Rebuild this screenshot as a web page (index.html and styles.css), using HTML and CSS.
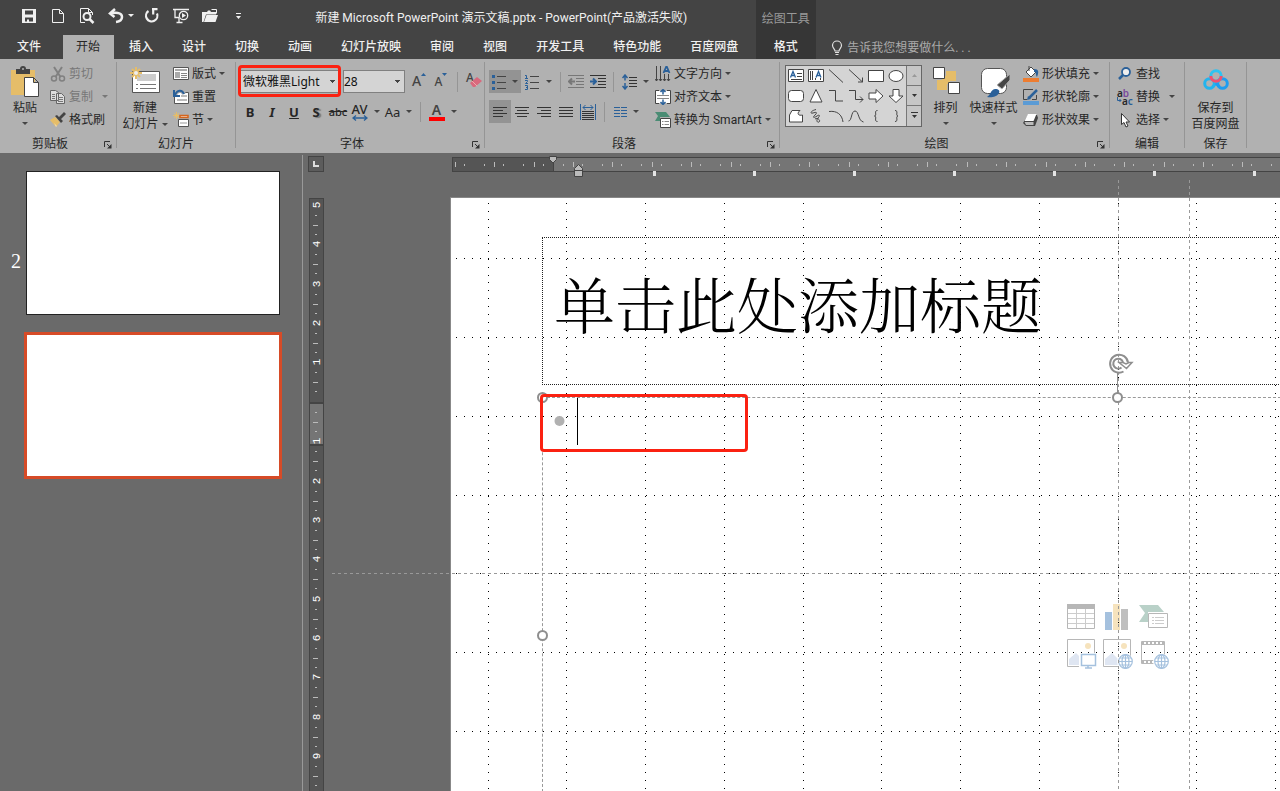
FILE: index.html
```html
<!DOCTYPE html>
<html lang="zh-CN">
<head>
<meta charset="utf-8">
<title>新建 Microsoft PowerPoint 演示文稿.pptx - PowerPoint</title>
<link rel="stylesheet" href="styles.css">
</head>
<body>
<div class="app">
<header class="header">
  <div class="titlebar">
    <div class="qat">
      <button class="qat-btn" aria-label="保存"><svg width="16" height="16"><path fill="#f0f0f0" fill-rule="evenodd" d="M1 1h14v14H1zM4 2.500v4h8v-4zM4 9.500v4h2v-2h2v2h4v-4z"/></svg></button>
      <button class="qat-btn" aria-label="新建"><svg width="16" height="16"><path fill="none" stroke="#f0f0f0" d="M2.500 1.500h7l4 4v9h-11zM9.500 1.500v4h4"/></svg></button>
      <button class="qat-btn" aria-label="打印预览"><svg width="16" height="16"><path fill="none" stroke="#f0f0f0" d="M6 14.500H1.500v-14h8l4 4V7M9.500.5v4h4"/><circle cx="8" cy="8.500" r="3.500" fill="none" stroke="#f0f0f0" stroke-width="2"/><path stroke="#f0f0f0" stroke-width="2.500" d="M10.500 11l4 4"/></svg></button>
      <button class="qat-btn undo" aria-label="撤消"><svg width="16" height="16"><path fill="none" stroke="#f0f0f0" stroke-width="2.500" d="M2 5.500c5-1 12-1.500 12 3.500 0 3-2 4.500-6 5M7 1L2 5.500 6.500 9"/></svg><i class="caret light"></i></button>
      <button class="qat-btn" aria-label="重复"><svg width="16" height="16"><path fill="none" stroke="#f0f0f0" stroke-width="2.200" d="M4.500 3A5.700 5.700 0 1 0 13 5.500M8 1.200h5.500M9.200 1v5.500"/></svg></button>
      <button class="qat-btn" aria-label="从头开始"><svg width="18" height="16"><path fill="none" stroke="#f0f0f0" stroke-width="1.300" d="M1 1.500h16M3 2v7.500h4M7 10v4M4.500 14.500h6"/><circle cx="11.500" cy="7.500" r="4.200" fill="#444" stroke="#f0f0f0" stroke-width="1.300"/><path fill="#f0f0f0" d="M10 5l4 2.500-4 2.500z"/></svg></button>
      <button class="qat-btn" aria-label="打开"><svg width="18" height="16"><path fill="#f0f0f0" d="M1 14V4h5l1-1.500h2L10 4h5v2.500H5L2.500 14zM3 14l2.500-7H17l-2.500 7z"/><path stroke="#f0f0f0" d="M10.500 1.500h5v4" fill="none"/></svg></button>
      <button class="qat-btn" aria-label="自定义快速访问工具栏"><svg width="7" height="8"><path fill="#f0f0f0" d="M1 1h5v1H1zM1 4h5L3.500 7z"/></svg></button>
    </div>
    <div class="doc-title">新建 Microsoft PowerPoint 演示文稿.pptx - PowerPoint(产品激活失败)</div>
  </div>
  <nav class="tabs">
    <button class="tab file">文件</button><button class="tab active">开始</button><button class="tab">插入</button><button class="tab">设计</button><button class="tab">切换</button><button class="tab">动画</button><button class="tab">幻灯片放映</button><button class="tab">审阅</button><button class="tab">视图</button><button class="tab">开发工具</button><button class="tab">特色功能</button><button class="tab">百度网盘</button>
  </nav>
  <div class="context"><span class="context-name">绘图工具</span><button class="tab">格式</button></div>
  <label class="tellme"><svg width="12" height="16"><path fill="none" stroke="#e0e0e0" stroke-width="1.200" d="M4 11c0-2-2.500-3-2.500-5.500a4.500 4.500 0 0 1 9 0C10.500 8 8 9 8 11zM4 12.500h4M4.500 14.500h3"/></svg><input type="text" aria-label="告诉我您想要做什么" placeholder="告诉我您想要做什么. . ."></label>
</header>

<div class="ribbon">
  <section class="group clipboard">
    <div class="body">
      <button class="big paste"><svg width="30" height="32"><path fill="#e5bd69" d="M1 4h24v25H1z"/><path fill="#444" d="M6 3h4a3 3 0 0 1 6 0h4v5H6z"/><circle cx="13" cy="3" r="1" fill="#b1b1b1"/><path fill="#fff" stroke="#444" d="M14.500 11.500h9l5 5v14h-14zM23.500 11.500v5h5"/></svg><span>粘贴</span><i class="caret"></i></button>
      <div class="stack">
        <button class="small off"><svg width="16" height="16"><path fill="none" stroke="#808080" stroke-width="2" d="M4 1l6.500 10M12 1L5.500 11"/><circle cx="4" cy="12.500" r="2.500" fill="none" stroke="#808080" stroke-width="1.500"/><circle cx="12" cy="12.500" r="2.500" fill="none" stroke="#808080" stroke-width="1.500"/></svg>剪切</button>
        <button class="small off wide"><svg width="16" height="16"><path fill="#ddd" stroke="#666" d="M.5 1.500h5l3 2v8h-8zM6.500 4.500h5l3 3v7h-8z"/><path stroke="#777" d="M2 5.500h3M2 7.500h3M2 9.500h3M8 8.500h5M8 10.500h5M8 12.500h5"/></svg>复制<i class="caret dim"></i></button>
        <button class="small"><svg width="16" height="16"><path fill="#e5bd69" d="M0 8l5-3 5 5-4 5z"/><path fill="#fff" opacity=".5" d="M4 11l3 3-1 1z"/><path fill="#444" d="M5 4l2-1 6 6-2 2zM9 5l5-5 2 2-5 5z"/></svg>格式刷</button>
      </div>
    </div>
    <footer class="foot"><span>剪贴板</span><button class="launch" aria-label="剪贴板选项"><svg width="8" height="8"><path fill="none" stroke="#333" d="M.5 6V.5H6M3 3l3 3"/><path fill="#333" d="M7.500 3v4.500H3z"/></svg></button></footer>
  </section>

  <section class="group slides">
    <div class="body">
      <button class="big newslide"><svg width="32" height="30"><path fill="#fff" stroke="#555" d="M3.500 5.500h27v21h-27z"/><path fill="#ccc" d="M8 8h19v7H8z"/><path stroke="#777" d="M7 18.500h2M11 18.500h16M7 22.500h2M11 22.500h16"/><path stroke="#e5bd69" stroke-width="2" d="M7 1v12M1 7h12M3 3l8 8M11 3l-8 8"/><circle cx="7" cy="7" r="2" fill="#eee"/></svg><span>新建</span><span>幻灯片<i class="caret"></i></span></button>
      <div class="stack">
        <button class="small"><svg width="16" height="16"><path fill="#fff" stroke="#555" d="M.5 1.500h15v12H.5z"/><path fill="#aaa" d="M2 3h12v2H2zM2 6h5v6H2z"/><path stroke="#888" d="M8 7.500h6M8 9.500h6M8 11.500h6"/></svg>版式<i class="caret"></i></button>
        <button class="small"><svg width="16" height="16"><path fill="#fff" stroke="#555" d="M1.500 3.500h14v11h-14z"/><path fill="#bbb" d="M8 6h6v2H8zM4 10h10v2H4z"/><path fill="none" stroke="#b1b1b1" stroke-width="4" d="M2 6c2-5 7-6 9-1"/><path fill="none" stroke="#2a6099" stroke-width="2" d="M2 6c2-5 7-6 9-1M1 1v6h6"/></svg>重置</button>
        <button class="small"><svg width="16" height="16"><path stroke="#e5bd69" d="M3.500 0v7M0 3.500h7M1 1l5 5M6 1L1 6"/><path fill="#fff" stroke="#d4651d" stroke-width="1.500" d="M7 3.500h8v2H7z"/><path fill="#fff" stroke="#555" d="M5.500 7.500h10v7h-10z"/><path fill="#ccc" d="M7 10h7v2H7z"/></svg>节<i class="caret"></i></button>
      </div>
    </div>
    <footer class="foot"><span>幻灯片</span></footer>
  </section>

  <section class="group font">
    <div class="body rows">
      <div class="row">
        <span class="marked"><select class="combo face" aria-label="字体"><option>微软雅黑Light</option></select></span>
        <select class="combo size" aria-label="字号"><option>28</option></select>
        <button class="tool grow" aria-label="增大字号"><b class="glyph">A</b><svg width="5" height="4"><path fill="#2a6099" d="M0 3l2.500-3L5 3z"/></svg></button>
        <button class="tool shrink" aria-label="减小字号"><b class="glyph">A</b><svg width="5" height="4"><path fill="#2a6099" d="M0 0h5L2.500 3z"/></svg></button>
        <i class="bar"></i>
        <button class="tool clear" aria-label="清除格式"><b class="glyph">A</b><svg width="12" height="12"><path fill="#d9697d" d="M0 7l7-6 5 4-7 6H3z"/><path stroke="#eaa" d="M2 5l5 5"/></svg></button>
      </div>
      <div class="row">
        <button class="tool"><b>B</b></button><button class="tool"><b><em>I</em></b></button><button class="tool"><b><u>U</u></b></button><button class="tool"><b class="shadow">S</b></button><button class="tool strike"><s>abc</s></button>
        <button class="tool drop"><span class="spacing">AV<svg width="16" height="6"><path fill="none" stroke="#2a6099" stroke-width="1.300" d="M1 3h14M4 .5L1 3l3 2.500M12 .5L15 3l-3 2.500"/></svg></span><i class="caret"></i></button>
        <button class="tool drop">Aa<i class="caret"></i></button>
        <i class="bar"></i>
        <button class="tool drop color"><span class="ink">A</span><i class="caret"></i></button>
      </div>
    </div>
    <footer class="foot"><span>字体</span><button class="launch" aria-label="字体选项"><svg width="8" height="8"><path fill="none" stroke="#333" d="M.5 6V.5H6M3 3l3 3"/><path fill="#333" d="M7.500 3v4.500H3z"/></svg></button></footer>
  </section>

  <section class="group paragraph">
    <div class="body">
      <div class="rows">
        <div class="row">
          <button class="tool drop on" aria-label="项目符号"><svg width="14" height="16"><path fill="#2a6099" d="M0 1h3v3H0zM0 7h3v3H0zM0 13h3v3H0z"/><path stroke="#444" d="M5 2.500h9M5 8.500h9M5 14.500h9"/></svg><i class="caret"></i></button>
          <button class="tool drop number" aria-label="编号"><svg width="15" height="16"><path fill="none" stroke="#2a6099" d="M0 1.500h1.500V5M0 4.500h3M0 6.500h2.500v1L.5 9.500H3M0 11.500h2.500v4H0M1 13.500h1.500"/><path stroke="#444" d="M5 2.500h9M5 8.500h9M5 14.500h9"/></svg><i class="caret"></i></button>
          <i class="bar"></i>
          <button class="tool" aria-label="减少缩进"><svg width="16" height="14"><path stroke="#777" d="M0 .5h16M8 3.500h8M8 6.500h8M8 9.500h8M0 12.500h16"/><path fill="none" stroke="#777" stroke-width="2" d="M7 6.500H1M4 3.500l-3 3 3 3"/></svg></button>
          <button class="tool" aria-label="增加缩进"><svg width="16" height="14"><path stroke="#333" d="M0 .5h16M8 3.500h8M8 6.500h8M8 9.500h8M0 12.500h16"/><path fill="none" stroke="#2a6099" stroke-width="2" d="M0 6.500h6M3 3.500l3 3-3 3"/></svg></button>
          <i class="bar"></i>
          <button class="tool drop" aria-label="行距"><svg width="15" height="16"><path fill="none" stroke="#2a6099" stroke-width="1.500" d="M3 1v5.500M3 9v6M.5 4L3 1l2.500 3M.5 12L3 15l2.500-3"/><path stroke="#333" d="M7 3.500h8M7 6.500h8M7 9.500h8M7 12.500h8"/></svg><i class="caret"></i></button>
        </div>
        <div class="row">
          <button class="tool on" aria-label="左对齐"><svg width="14" height="12"><path stroke="#333" d="M0 1.500h14M0 4.500h10M0 7.500h14M0 10.500h10"/></svg></button>
          <button class="tool" aria-label="居中"><svg width="14" height="12"><path stroke="#333" d="M0 1.500h14M2 4.500h10M0 7.500h14M2 10.500h10"/></svg></button>
          <button class="tool" aria-label="右对齐"><svg width="14" height="12"><path stroke="#333" d="M0 1.500h14M4 4.500h10M0 7.500h14M4 10.500h10"/></svg></button>
          <button class="tool" aria-label="两端对齐"><svg width="14" height="12"><path stroke="#333" d="M0 1.500h14M0 4.500h14M0 7.500h14M0 10.500h14"/></svg></button>
          <button class="tool" aria-label="分散对齐"><svg width="16" height="16"><path stroke="#2a6099" fill="none" d="M.5 0v16M15.500 0v16M3 3.500h10M5.500 1L3 3.500 5.500 6M10.500 1L13 3.500 10.500 6"/><path stroke="#333" d="M2 7.500h12M2 9.500h12M2 11.500h12M2 13.500h12M2 15.500h12"/></svg></button>
          <i class="bar"></i>
          <button class="tool drop" aria-label="分栏"><svg width="13" height="12"><path stroke="#2a6099" d="M0 1.500h6M7 1.500h6M0 4.500h6M7 4.500h6M0 7.500h6M7 7.500h6M0 10.500h6M7 10.500h6"/></svg><i class="caret"></i></button>
        </div>
      </div>
      <div class="stack">
        <button class="small"><svg width="16" height="16"><path stroke="#444" fill="none" d="M1.500 0v15M5.500 0v15M9.500 8v7M13.500 8v7M0 13l1.500 2L3 13M4 13l1.500 2L7 13M8 13l1.500 2 1.500-2M12 13l1.500 2 1.500-2"/><path fill="none" stroke="#2a6099" stroke-width="1.800" d="M8.500 7L11.500 0l3 7M9 5h5"/></svg>文字方向<i class="caret"></i></button>
        <button class="small"><svg width="16" height="16"><path fill="#fff" stroke="#444" d="M4 1.500H.5v13H4M12 1.500h3.500v13H12"/><path fill="#fff" d="M1 2h14v12H1z"/><path stroke="#888" d="M2 6.500h12M2 9.500h12"/><path fill="none" stroke="#2a6099" stroke-width="1.500" d="M8 0v5.500M5.500 3L8 .5 10.500 3M8 10.500V16M5.500 13L8 15.500l2.500-2.500"/></svg>对齐文本<i class="caret"></i></button>
        <button class="small"><svg width="16" height="16"><path fill="#4a8c74" d="M0 0h11l4 5H5v4H0l3-5z"/><path fill="#fff" stroke="#444" d="M5.500 6.500h10v9h-10z"/><path stroke="#888" d="M7 9.500h1.500M9.500 9.500H14M7 12.500h1.500M9.500 12.500H14"/></svg>转换为 SmartArt<i class="caret"></i></button>
      </div>
    </div>
    <footer class="foot"><span>段落</span><button class="launch" aria-label="段落选项"><svg width="8" height="8"><path fill="none" stroke="#333" d="M.5 6V.5H6M3 3l3 3"/><path fill="#333" d="M7.500 3v4.500H3z"/></svg></button></footer>
  </section>

  <section class="group drawing">
    <div class="body">
      <div class="gallery">
        <div class="shapes">
          <button aria-label="文本框"><svg class="sh" viewBox="0 0 16 14"><path class="w" d="M.5.5h15v12H.5z"/><path d="M9 4.500h5M9 7.500h5M3 10.500h11"/><path class="blue" d="M2.500 8.500l2.500-6 2.500 6M3.500 6.500h3"/></svg></button>
          <button aria-label="竖排文本框"><svg class="sh" viewBox="0 0 16 14"><path class="w" d="M.5.5h15v12H.5z"/><path d="M2.500 2v9M4.500 2v9M7.500 9v2M12.500 9v2"/><path class="blue" d="M8 8.500l2.500-6 2.500 6M9 6.500h3"/></svg></button>
          <button aria-label="直线"><svg class="sh" viewBox="0 0 16 14"><path d="M1 .5L15 13.500"/></svg></button>
          <button aria-label="箭头"><svg class="sh" viewBox="0 0 16 14"><path d="M1 .5L14.500 13M14.500 8.500V13H10"/></svg></button>
          <button aria-label="矩形"><svg class="sh" viewBox="0 0 16 14"><path class="w" d="M.5 1.500h15v11H.5z"/></svg></button>
          <button aria-label="椭圆"><svg class="sh" viewBox="0 0 16 14"><ellipse class="w" cx="8" cy="7" rx="7" ry="5.500"/></svg></button>
          <button aria-label="圆角矩形"><svg class="sh" viewBox="0 0 16 14"><rect class="w" x=".5" y="1.500" width="15" height="11" rx="3"/></svg></button>
          <button aria-label="三角形"><svg class="sh" viewBox="0 0 16 14"><path class="w" d="M8 .5L14 13H2z"/></svg></button>
          <button aria-label="肘形连接符"><svg class="sh" viewBox="0 0 16 14"><path d="M1 1.500h6.500v10.500H15"/></svg></button>
          <button aria-label="肘形箭头"><svg class="sh" viewBox="0 0 16 14"><path d="M1 1.500h6.500v9H15M12 7.500l3 3-3 3"/></svg></button>
          <button aria-label="右箭头"><svg class="sh" viewBox="0 0 16 14"><path class="w" d="M1 4h7V.5L15 7l-7 6.500V10H1z"/></svg></button>
          <button aria-label="下箭头"><svg class="sh" viewBox="0 0 16 14"><path class="w" d="M5 .5h6V7h4l-7 6.500L1 7h4z"/></svg></button>
          <button aria-label="任意多边形"><svg class="sh" viewBox="0 0 16 14"><path class="w" d="M4 1.500h8C8 5 11 7 14.500 6v7H1.500V6z"/></svg></button>
          <button aria-label="自由曲线"><svg class="sh" viewBox="0 0 16 14"><path d="M8 .5C2 2 2 5 5 4s5-1 2 2-1 3 2 1 3 0 1 2-1 5 1 4-1-5-4-3"/></svg></button>
          <button aria-label="弧线"><svg class="sh" viewBox="0 0 16 14"><path d="M1 2.500c8-1 13 3 14 10.500"/></svg></button>
          <button aria-label="曲线"><svg class="sh" viewBox="0 0 16 14"><path d="M.5 12C4 12 3 2 7 2s3 10 8.500 11"/></svg></button>
          <button aria-label="左大括号"><svg class="sh" viewBox="0 0 16 14"><path d="M9.500 1.500c-4 0 0 5-3 5.500 3 .5-1 5.500 3 5.500"/></svg></button>
          <button aria-label="右大括号"><svg class="sh" viewBox="0 0 16 14"><path d="M7 1.500c4 0 0 5 3 5.500-3 .5 1 5.500-3 5.500"/></svg></button>
        </div>
        <div class="scroll">
          <button aria-label="上一行"><svg width="7" height="5"><path fill="#999" d="M1 4l2.500-3L6 4z"/></svg></button>
          <button aria-label="下一行"><svg width="7" height="5"><path fill="#333" d="M1 1h5L3.500 4z"/></svg></button>
          <button aria-label="其他"><svg width="7" height="8"><path fill="#333" d="M0 0h7v1H0zM1 3h5L3.500 6z"/></svg></button>
        </div>
      </div>
      <button class="big arrange"><svg width="28" height="30"><path fill="#e5bd69" d="M14 5h10v10H14zM5 14h10v10H5z"/><path fill="#e5bd69" d="M10 10h8v8h-8z"/><path fill="#fff" stroke="#444" d="M1.500 1.500h11v11h-11zM16.500 16.500h11v11h-11z"/></svg><span>排列</span><i class="caret"></i></button>
      <button class="big quick"><svg width="32" height="32"><rect x="3.500" y="2.500" width="25" height="25" rx="6" fill="#fff" stroke="#555"/><path fill="#444" stroke="#b1b1b1" d="M32 8v6l-8 9-5-4z"/><path fill="#2a6099" d="M9 31c4-2 3-7 8-8 4 0 5 2 4 4-2 4-8 5-12 4z"/></svg><span>快速样式</span><i class="caret"></i></button>
      <div class="stack">
        <button class="small"><svg width="16" height="16"><path fill="#fff" stroke="#444" d="M3 6l5-5 5 5-5 5z"/><path fill="none" stroke="#444" d="M6 0v5"/><path fill="#2a6099" d="M11 3c5 0 5 3 3 8-2-3 0-5-3-5z"/><path fill="#ed7d31" d="M0 12h16v4H0z"/></svg>形状填充<i class="caret"></i></button>
        <button class="small"><svg width="16" height="16"><path fill="none" stroke="#444" d="M10 .5H.5v10H4M13.500 6v4.500H9"/><path stroke="#2a6099" stroke-width="2.500" d="M14 1L6 9"/><path fill="#2a6099" d="M4 11l1-4 3 3z"/><path fill="#5b9bd5" d="M0 12h16v4H0z"/></svg>形状轮廓<i class="caret"></i></button>
        <button class="small"><svg width="16" height="16"><path fill="#444" d="M5 3h9l1 3-3 8H3L0 11z"/><path fill="#fff" d="M5 2h8.500l-3 7H1.500z"/><path fill="#bbb" d="M1.500 10h9v3H3z"/></svg>形状效果<i class="caret"></i></button>
      </div>
    </div>
    <footer class="foot"><span>绘图</span><button class="launch" aria-label="绘图选项"><svg width="8" height="8"><path fill="none" stroke="#333" d="M.5 6V.5H6M3 3l3 3"/><path fill="#333" d="M7.500 3v4.500H3z"/></svg></button></footer>
  </section>

  <section class="group edit">
    <div class="body">
      <div class="stack">
        <button class="small"><svg width="16" height="16"><circle cx="9" cy="6" r="4" fill="#eee" stroke="#2a6099" stroke-width="1.800"/><path stroke="#2a6099" stroke-width="2.500" d="M6 9l-4 4"/></svg>查找</button>
        <button class="small wide"><span class="swap"><b>a<i>b</i></b><b><svg width="5" height="6"><path fill="none" stroke="#2a6099" d="M.5 0v3.500H4M2.500 2L4 3.500 2.500 5"/></svg>a<em>c</em></b></span>替换<i class="caret"></i></button>
        <button class="small"><svg width="16" height="16"><path fill="#fff" stroke="#333" d="M4.500 1.500v11l2.500-2 2 4.500 2-1-2-4h3.500z"/></svg>选择<i class="caret"></i></button>
      </div>
    </div>
    <footer class="foot"><span>编辑</span></footer>
  </section>

  <section class="group save">
    <div class="body">
      <button class="big cloud"><svg width="26" height="30"><g fill="none" stroke-width="3"><circle cx="6.500" cy="17.500" r="4.800" stroke="#23b4ee"/><circle cx="19.500" cy="17.500" r="4.800" stroke="#1e9df0"/><path stroke="#23b4ee" d="M9.500 21L17 13"/><path stroke="#1e9df0" d="M16.500 21L13 17"/><circle cx="13" cy="10" r="5.200" stroke="#2dc3f2"/><path stroke="#f2506e" d="M7.800 10a5.200 5.200 0 0 0 10.400 0"/></g></svg><span>保存到</span><span>百度网盘</span></button>
    </div>
    <footer class="foot"><span>保存</span></footer>
  </section>
</div>

<main class="work">
  <aside class="thumbs">
    <span class="num">2</span>
    <div class="list">
      <button class="thumb" aria-label="幻灯片 1"></button>
      <button class="thumb current" aria-label="幻灯片 2"></button>
    </div>
  </aside>
  <section class="editor">
    <button class="corner" aria-label="制表符类型"><svg width="6" height="6"><path fill="#ddd" d="M0 0h2v4h4v2H0z"/></svg></button>
    <div class="hruler">
      <svg class="hscale" id="hscale"></svg>
      <svg class="marks" id="marks"><path fill="#bbb" stroke="#444" d="M97.500.5h7v3l-3.500 3.500-3.500-3.500zM122.500 20.500v-8l4-4 4 4v8zM122.500 14.500h8"/></svg>
    </div>
    <div class="vruler"><svg class="vscale" id="vscale"></svg></div>
    <div class="canvas">
      <div class="slide">
        <h1 class="ph title">单击此处添加标题</h1>
        <div class="ph content"></div>
        <div class="inserts">
          <button aria-label="插入表格"><svg width="30" height="30"><path fill="#fff" stroke="#b7b7b7" d="M1.500 3.500h27v24h-27z"/><path fill="#b7b7b7" d="M1 3h28v5H1z"/><path stroke="#ccc" d="M2 12.500h26M2 17.500h26M2 22.500h26M10.500 8v19M19.500 8v19"/></svg></button>
          <button aria-label="插入图表"><svg width="30" height="30"><path fill="#a5c1de" d="M3 11h7v18H3z"/><path fill="#f6e3bd" d="M11 3h7v26h-7z"/><path fill="#bfbfbf" d="M19 8h7v21h-7z"/></svg></button>
          <button aria-label="插入 SmartArt"><svg width="30" height="30"><path fill="#b9d1c8" d="M1 4h19l6 7H10v10H1l6-9z"/><path fill="#fff" stroke="#b7b7b7" d="M10.500 12.500h19v14h-19z"/><path stroke="#ccc" d="M14 16.500h2M17 16.500h9M14 19.500h2M17 19.500h9M14 22.500h2M17 22.500h9"/></svg></button>
          <button aria-label="图片"><svg width="31" height="30"><path fill="#fff" stroke="#b7b7b7" d="M1.500.5h27v27h-27z"/><circle cx="22" cy="7" r="3" fill="#f6e3bd"/><path fill="#dfe6f2" d="M3 20l7-6 9 9v3H3z"/><path fill="#fff" stroke="#fff" stroke-width="4" d="M15 16h15v10H15z"/><path fill="#fff" stroke="#a5c1de" stroke-width="1.500" d="M15.500 15.500h14v11h-14zM22 27v2M19 29h7"/></svg></button>
          <button aria-label="联机图片"><svg width="31" height="30"><path fill="#fff" stroke="#b7b7b7" d="M1.500.5h27v27h-27z"/><circle cx="22" cy="7" r="3" fill="#f6e3bd"/><path fill="#dfe6f2" d="M3 20l7-6 9 9v3H3z"/><circle cx="23" cy="22.500" r="8" fill="#fff"/><g fill="none" stroke="#a5c1de" stroke-width="1.200"><circle cx="23.500" cy="22.500" r="6.800"/><ellipse cx="23.500" cy="22.500" rx="3.500" ry="6.800"/><path d="M23.500 16v13M17 22.500h13M18 19h11M18 26h11"/></g></svg></button>
          <button aria-label="插入视频"><svg width="31" height="30"><path fill="#fff" stroke="#b7b7b7" d="M3.500 2.500h23v22h-23zM3 5.500h24M3 21.500h24"/><path stroke="#b7b7b7" stroke-width="3" stroke-dasharray="2 2" d="M4 4h23M4 23h23"/><circle cx="23" cy="22.500" r="8" fill="#fff"/><g fill="none" stroke="#a5c1de" stroke-width="1.200"><circle cx="23.500" cy="22.500" r="6.800"/><ellipse cx="23.500" cy="22.500" rx="3.500" ry="6.800"/><path d="M23.500 16v13M17 22.500h13M18 19h11M18 26h11"/></g></svg></button>
        </div>
      </div>
      <svg class="overlay" id="overlay">
        <g id="grid" stroke="#000" stroke-dasharray="1 7 1 7 1 7 1 7 1 7 1 7 1 7 1 7 1 7 1 6"></g>
        <g stroke="#999" stroke-dasharray="3 3" id="guides"></g>
        <g fill="#fff" stroke="#8e8e8e" stroke-width="2"><circle cx="210.500" cy="217.500" r="4.500"/><circle cx="210.500" cy="455.500" r="4.500"/><path fill="none" stroke-width="1" d="M785.500 193v20"/><circle cx="785.500" cy="217.500" r="4.500"/></g>
        <g fill="none" stroke="#8e8e8e" stroke-width="2"><path d="M791.500 191.500a9 9 0 1 1 4.500-9"/><path d="M789.500 187.500a5 5 0 1 1 1.500-5.500"/><path fill="#fff" stroke-width="1.500" d="M787 182.500h4l3 1.500 3-1.500h3l-5.500 6z"/></g>
        <circle cx="227.500" cy="241" r="5" fill="#b1b1b1"/>
        <path stroke="#000" d="M245.500 218v47"/>
      </svg>
      <div class="callout"></div>
    </div>
  </section>
</main>
</div>
<script src="script.js"></script>
</body>
</html>
```

FILE: styles.css
```css
* { box-sizing: border-box; }
body {
  margin: 0;
  font: 12px/16px Roboto, "Noto Sans CJK SC", sans-serif;
  color: #262626;
  background: #6a6a6a;
}
button { border: 0; padding: 0; margin: 0; background: none; color: inherit; font: inherit; white-space: nowrap; }
svg { display: block; flex: none; }
.app { display: flex; flex-direction: column; height: 100vh; overflow: hidden; }

/* header */
.header {
  display: grid;
  grid-template: 35px 24px / auto 60px 1fr;
  background: #444;
  color: #f0f0f0;
}
.titlebar { display: flex; align-items: center; justify-content: space-between; padding: 0 69px 4px 14px; }
.qat { display: flex; align-items: center; }
.qat-btn { display: flex; align-items: center; justify-content: center; width: 29px; height: 24px; }
.qat-btn.undo { width: 36px; gap: 4px; padding-left: 3px; }
.doc-title { padding-top: 5px; white-space: nowrap; }
.tabs { grid-row: 2; display: flex; gap: 1px; padding-right: 4px; }
.tab { padding: 0 14px; height: 24px; font-weight: 500; }
.tab.file { width: 62px; padding-right: 18px; }
.tab.active { padding-left: 13px; background: #b1b1b1; color: #262626; font-weight: 400; }
.context { grid-area: 1 / 2 / 3 / 3; display: flex; flex-direction: column; align-items: center; justify-content: space-between; padding: 11px 1px 0 0; background: #363636; }
.context-name { color: #999; }
.tellme { grid-area: 2 / 3; display: flex; align-items: center; gap: 4px; padding: 1px 0 0 15px; }
.tellme input { flex: 1; min-width: 0; border: 0; padding: 0; background: none; color: #fff; font: inherit; outline: 0; }
.tellme input::placeholder { color: #aaa; opacity: 1; }

/* ribbon */
.ribbon { display: flex; flex: none; height: 94px; padding-top: 3px; background: #b1b1b1; overflow: hidden; }
.group {
  display: flex; flex-direction: column; flex: none;
  background: linear-gradient(#959595, #959595) right top / 1px 86px no-repeat;
}
.clipboard { width: 117px; }
.slides { width: 119px; }
.font { width: 249px; }
.paragraph { width: 295px; }
.drawing { width: 330px; }
.edit { width: 75px; }
.save { width: 62px; }
.body { display: flex; height: 74px; }
.foot { display: flex; height: 17px; padding-right: 1px; text-align: center; }
.foot span { flex: 1; }
.launch { display: flex; align-items: center; justify-content: center; width: 16px; }
.caret { flex: none; display: inline-block; width: 0; height: 0; border: 3px solid transparent; border-top-color: #444; border-bottom: 0; }
.caret.light { border-top-color: #f0f0f0; }
.caret.dim { border-top-color: #777; }

.big { display: flex; flex-direction: column; align-items: center; padding-top: 4px; }
.big svg { height: 34px; }
.big .caret { margin-top: 6px; }
.big span .caret { margin: 0 0 2px 3px; }
.paste { width: 50px; }
.newslide { width: 56px; }
.arrange { width: 47px; }
.quick { width: 49px; }
.cloud { width: 61px; }

.stack { display: flex; flex-direction: column; }
.small { display: flex; align-items: center; gap: 3px; height: 23px; }
.small .caret { margin-left: 0; }
.small.wide .caret { margin-left: 6px; }
.small.off { color: #777; }

.rows { display: flex; flex-direction: column; gap: 7px; height: 74px; padding-top: 8px; font-family: "Noto Sans", "Noto Sans CJK SC", sans-serif; }
.row { display: flex; align-items: center; height: 23px; }
.font .body { padding-left: 3px; }
.tool { display: flex; align-items: center; justify-content: center; width: 22px; height: 23px; font-size: 13px; }
.tool.on { background: #939393; }
.tool.drop { gap: 6px; width: 33px; }
.bar { width: 1px; height: 20px; margin: 0 5px; background: #959595; }
.combo {
  height: 23px; border: 1px solid #808080; border-radius: 0; padding: 0 2px; color: #111; font: inherit; appearance: none;
  background: #d4d4d4 conic-gradient(from -45deg at 50% 100%, #444 90deg, #d4d4d4 0) right 4px center / 6px 3px no-repeat;
}
.marked { position: relative; display: flex; margin-left: 1px; }
.marked::after { content: ""; position: absolute; inset: -5px -1px -4px -2px; border: 3px solid #fb2111; border-radius: 4px; pointer-events: none; }
.face { width: 100px; }
.size { width: 62px; padding: 0; margin: 0 3px; }
.glyph { font-weight: 500; font-size: 14px; color: #444; }
.grow, .shrink { align-items: flex-start; padding-top: 3px; }
.shrink .glyph { font-size: 12px; padding-top: 1px; }
.clear .glyph { font-size: 12px; align-self: flex-start; }
.clear svg { margin-left: -4px; }
.shadow { text-shadow: 2px 1px 1px #777; }
.strike { font-size: 11px; font-weight: 500; }
.spacing { display: flex; flex-direction: column; align-items: center; font-weight: 500; line-height: 12px; }
.ink { width: 16px; border-bottom: 4px solid #f00; font-size: 14px; font-weight: 600; line-height: 14px; color: #444; }
.paragraph .rows { width: 166px; padding-left: 4px; }
.paragraph .stack { padding-left: 4px; }
.number { margin-left: 2px; }

.gallery { display: flex; width: 137px; height: 62px; margin: 3px 0 0 5px; border: 1px solid #666; background: #d4d4d4; }
.shapes { flex: 1; display: grid; grid-template-columns: repeat(6, 20px); grid-auto-rows: 20px; }
.shapes button { display: flex; align-items: center; justify-content: center; }
.sh { width: 16px; height: 14px; fill: none; stroke: #444; stroke-width: 1; }
.sh .w { fill: #fff; }
.sh .blue { stroke: #2a6099; stroke-width: 1.3; }
.scroll { display: grid; grid-template-rows: repeat(3, 1fr); width: 15px; border-left: 1px solid #777; background: #c6c6c6; }
.scroll button { display: flex; align-items: center; justify-content: center; border-bottom: 1px solid #777; }
.scroll button:last-child { border-bottom: 0; }
.drawing .stack { padding-left: 5px; }
.edit .stack { padding-left: 7px; }
.swap { width: 16px; font: 10px/8px "Noto Sans", sans-serif; text-align: left; }
.swap b { display: flex; height: 8px; font-weight: 600; }
.swap i { font-style: normal; color: #7a4a9c; }
.swap em { font-style: normal; color: #2a6099; }

/* workspace */
.work { flex: 1; min-height: 0; display: flex; background: #6a6a6a; }
.thumbs { display: flex; width: 303px; margin-top: 2px; padding-top: 16px; border-right: 1px solid #999; }
.num { width: 24px; padding: 80px 0 0 11px; color: #fff; font: 20px/20px "Liberation Serif", serif; }
.list { display: flex; flex-direction: column; gap: 17px; }
.thumb { width: 254px; height: 144px; margin: 0 2px; border: 1px solid #222; background: #fff; }
.thumb.current { width: 258px; height: 147px; margin: 0; border: 3px solid #d64b27; }
.editor { flex: 1; min-width: 0; display: grid; grid-template: 27px minmax(0, 1fr) / 16px minmax(0, 1fr); column-gap: 8px; padding-left: 5px; }
.corner { display: flex; align-items: center; justify-content: center; width: 16px; height: 16px; margin-top: 3px; border: 1px solid #444; background: #5c5c5c; }
.hruler { position: relative; padding: 4px 0 0 120px; }
.hscale { width: 100%; height: 15px; border: 1px solid #444; border-right: 0; background: linear-gradient(90deg, #555 100px, #444 100px, #444 101px, #757575 101px); }
.marks { position: absolute; left: 120px; top: 3px; width: calc(100% - 120px); height: 24px; }
.vruler { margin: 18px 0 0 1px; width: 15px; border: 1px solid #444; border-bottom: 0; background: linear-gradient(#555 203px, #444 203px, #444 205px, #757575 205px, #757575 245px, #444 245px, #444 247px, #555 247px); overflow: hidden; }
.vscale { width: 13px; height: 100%; }
.vscale text { fill: #fff; font: 11px "Liberation Mono", monospace; text-anchor: middle; }
.canvas { position: relative; overflow: hidden; }
.slide { position: absolute; inset: 17px 0 0 118px; border: solid #888; border-width: 1px 0 0 1px; background: #fff; overflow: hidden; }
.ph { position: absolute; left: 91px; right: -1px; margin: 0; }
.title { top: 39px; height: 148px; border: 1px dotted #222; display: flex; align-items: center; padding: 0 0 16px 11px; color: #000; font: 300 61px/80px "Noto Serif CJK SC", "Noto Sans CJK SC", serif; white-space: nowrap; }
.content { top: 199px; bottom: -1px; border: 1px dashed #999; }
.inserts { position: absolute; left: 615px; top: 403px; display: grid; grid-template-columns: repeat(3, 36px); grid-auto-rows: 38px; }
.inserts button { display: flex; }
.overlay { position: absolute; inset: 0; width: 100%; height: 100%; }
.callout { position: absolute; left: 208px; top: 214px; width: 208px; height: 58px; border: 3px solid #fb2111; border-radius: 4px; }
#grid, #guides, #hscale, #vscale { shape-rendering: crispEdges; }
```

FILE: script.js
```js
// Draws ruler ticks, grid lines and guides. One centimetre is 39.37px at this zoom.
const CM = 39.37;
const EXTENT = 4000;
const LAST_MARK = 14; // vertical ruler runs from 5 down to 9
const NS = "http://www.w3.org/2000/svg";

function add(parent, tag, attrs, text) {
  const node = document.createElementNS(NS, tag);
  for (const key in attrs) node.setAttribute(key, attrs[key]);
  if (text !== undefined) node.textContent = text;
  document.getElementById(parent).appendChild(node);
}

let ticks = "";
for (let i = 0; i * CM < EXTENT; i++) {
  const x = Math.round(2 + i * CM);
  ticks += `M${x + 0.5} 4v5M${x + 9.5} 6v2M${x + 29.5} 6v2`;
}
add("hscale", "path", { d: ticks, stroke: "#bbb" });

let stops = "";
for (let x = 201; x < EXTENT; x += 100) stops += `M${x} 15h3v5h-3z`;
add("marks", "path", { d: stops, fill: "#e4e4e4" });

ticks = "";
for (let i = 0; i <= LAST_MARK; i++) {
  const y = Math.round(6 + i * CM);
  ticks += `M5 ${y + 10.5}h2M3 ${y + 20.5}h5M5 ${y + 29.5}h2`;
  if (i !== 5) {
    add("vscale", "text", { transform: `translate(10 ${y}) rotate(-90)` }, Math.abs(5 - i));
  }
}
add("vscale", "path", { d: ticks, stroke: "#bbb" });

for (let i = 0; i * 2 * CM < EXTENT; i++) {
  const x = Math.floor(156.2 + i * 2 * CM) + 0.5;
  const y = Math.round(78.3 + i * 2 * CM) + 0.5;
  add("grid", "path", { d: `M${x} 23V${EXTENT}` });
  add("grid", "path", { d: `M124 ${y}H${EXTENT}` });
}
add("guides", "path", { d: `M786.5 0V${EXTENT}M857.5 0V${EXTENT}M0 393.5H${EXTENT}` });
```
